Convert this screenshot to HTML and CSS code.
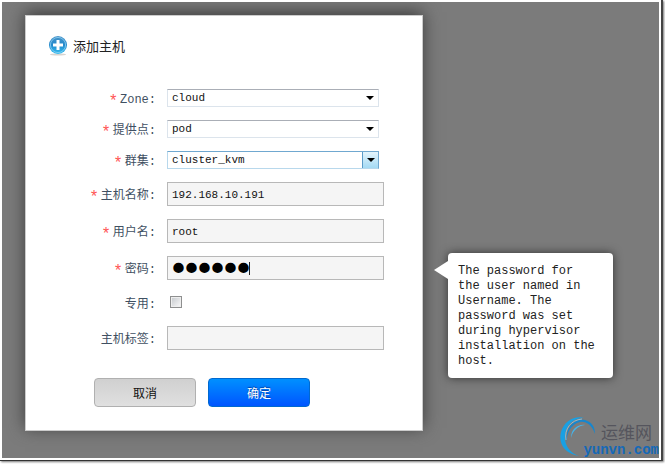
FILE: index.html
```html
<!DOCTYPE html>
<html lang="zh-CN">
<head>
<meta charset="utf-8">
<title>添加主机</title>
<link rel="stylesheet" href="styles.css">
</head>
<body>
<div class="frame">
<main class="stage">
  <section class="dialog" aria-labelledby="dialog-title">
    <header class="dialog-head">
      <svg class="add-icon" viewBox="0 0 20 22" aria-hidden="true">
        <defs>
          <linearGradient id="ball" x1="0" y1="0" x2="0" y2="1">
            <stop offset="0" stop-color="#4a94c8"/><stop offset=".5" stop-color="#2389cc"/><stop offset="1" stop-color="#35c0f2"/>
          </linearGradient>
        </defs>
        <ellipse cx="10" cy="19.5" rx="8" ry="1" fill="#d8d4d0"/>
        <circle cx="10" cy="10" r="9" fill="url(#ball)"/>
        <circle cx="10" cy="10" r="7.6" fill="none" stroke="#8fd0f2" stroke-width=".8"/>
        <path d="M8.500 5h3v3.500h3.500v3h-3.500v3.500h-3v-3.500h-3.500v-3h3.500z" fill="#fff"/>
      </svg>
      <h1 id="dialog-title">添加主机</h1>
    </header>
    <form class="form">
      <div class="row">
        <label for="zone"><span class="req">*</span>Zone:</label>
        <span class="picker"><select id="zone"><option>cloud</option></select><span class="arrow"></span></span>
      </div>
      <div class="row">
        <label for="pod"><span class="req">*</span>提供点:</label>
        <span class="picker"><select id="pod"><option>pod</option></select><span class="arrow"></span></span>
      </div>
      <div class="row">
        <label for="cluster"><span class="req">*</span>群集:</label>
        <span class="picker active"><select id="cluster"><option>cluster_kvm</option></select><span class="arrow"></span></span>
      </div>
      <div class="row">
        <label for="host"><span class="req">*</span>主机名称:</label>
        <input class="field" id="host" type="text" value="192.168.10.191">
      </div>
      <div class="row">
        <label for="user"><span class="req">*</span>用户名:</label>
        <input class="field" id="user" type="text" value="root">
      </div>
      <div class="row">
        <label for="password"><span class="req">*</span>密码:</label>
        <span class="secret">
          <input class="field" id="password" type="password" value="secret" aria-describedby="password-tip">
          <span class="caret"></span>
        </span>
      </div>
      <div class="row check-row">
        <label for="dedicated">专用:</label>
        <input class="check" id="dedicated" type="checkbox">
      </div>
      <div class="row">
        <label for="tags">主机标签:</label>
        <input class="field" id="tags" type="text">
      </div>
      <div class="actions">
        <button class="btn" type="button">取消</button>
        <button class="btn primary" type="button">确定</button>
      </div>
    </form>
  </section>
  <aside class="tip" id="password-tip" role="tooltip">The password for the user named in Username. The password was set during hypervisor installation on the host.</aside>
  <div class="brand">
    <svg class="swirl" viewBox="0 0 38 42" aria-hidden="true">
      <path d="M20 40C6 38-1 28 2 16C5 5 16-1 25 2C14 2 7 9 6 19C5 29 11 37 20 40Z" fill="#18a0e4"/>
      <path d="M8 27C5 13 15 2 26 4C33 6 36 11 36 18C33 9 27 5 21 6C12 8 7 17 8 27Z" fill="#1687cf"/>
      <path d="M12 22C12 13 19 8 26 9C19 10 14 14 12 22Z" fill="#45b4ea"/>
      <path d="M7 24C5 13 12 4 23 3" fill="none" stroke="#a4d6ee" stroke-width=".7"/>
    </svg>
    <div class="brand-text"><span class="brand-name">运维网</span><span class="brand-url">yunvn.com</span></div>
  </div>
</main>
</div>
</body>
</html>
```
FILE: styles.css
```css
* { box-sizing: border-box; }

body {
  margin: 0;
  height: 100vh;
  padding: 0 2px 3px 0;
  background: #fff;
  color: #111;
  font: 11px/16px "Liberation Mono", "Noto Sans CJK SC", monospace;
}

.frame {
  height: 100%;
  padding: 2px;
  border-right: 2px solid #444;
  border-bottom: 1px solid #333;
  box-shadow: 1px 1px 2px #777;
}

.stage {
  position: relative;
  height: 100%;
  padding: 13px 23px;
  background: #7b7b7b;
  overflow: hidden;
}

.dialog {
  width: 65%;
  min-width: 398px;
  padding: 19px 24px 23px;
  background: #fff;
  border: 1px solid #ccc;
  box-shadow: 0 -3px 16px #3c3c3c;
}

.dialog-head {
  display: flex;
  align-items: center;
  gap: 5px;
  height: 22px;
}

.add-icon { width: 20px; height: 22px; margin-left: -2px; }

h1 {
  margin: 0;
  color: #222;
  font: 13px/20px "Noto Sans CJK SC", sans-serif;
}

.form {
  display: flex;
  flex-direction: column;
  gap: 13px;
  padding-top: 32px;
}

.row {
  display: grid;
  grid-template-columns: 106px 217px;
  column-gap: 11px;
  align-items: center;
}

label {
  height: 18px;
  padding-top: 2px;
  color: #3f5062;
  font-size: 12px;
  line-height: 18px;
  text-align: right;
  white-space: nowrap;
}

.req {
  margin-right: 2px;
  color: #f55;
  font-size: 16px;
  line-height: 12px;
  vertical-align: -3px;
}

.picker {
  position: relative;
  display: flex;
  width: 212px;
  height: 18px;
  border: 1px solid #dce4ec;
  border-top-color: #aaaeb6;
}

select {
  appearance: none;
  width: 100%;
  padding: 0 20px 0 4px;
  border: 0;
  outline: 0;
  background: none;
  color: #111;
  font: inherit;
}

.arrow {
  position: absolute;
  inset: 0 0 0 auto;
  display: grid;
  place-items: center;
  width: 16px;
  pointer-events: none;
}

.arrow::before {
  content: "";
  border: 4px solid transparent;
  border-top-color: #000;
  border-bottom: 0;
}

.active { border-color: #70a8d0 #70a8d0 #b8d8ec #b8d8ec; }

.active .arrow {
  border: 1px solid #5b9bc8;
  border-width: 0 0 0 1px;
  background: linear-gradient(#e4f4fc, #a4daf4);
}

.field {
  width: 100%;
  height: 24px;
  padding: 2px 4px 0;
  border: 1px solid #b8b8b8;
  border-radius: 0;
  outline: 0;
  background: #f5f5f5;
  color: #111;
  font: inherit;
}

.secret { position: relative; display: flex; }

.secret .field {
  padding-top: 0;
  color: #000;
  font: 22px/22px "DejaVu Sans", sans-serif;
  -webkit-text-stroke: 4px #000;
}

.caret {
  position: absolute;
  top: 6px;
  left: 82px;
  width: 1px;
  height: 13px;
  background: #222;
}

.check-row { height: 20px; }

.check {
  appearance: none;
  width: 12px;
  height: 12px;
  margin: 0 3px 2px;
  border: 1px solid #8e8f8f;
  background: linear-gradient(135deg, #c4c8cc, #fafafa);
  box-shadow: inset 0 0 0 1px #eee;
}

.actions {
  display: flex;
  gap: 12px;
  margin: 15px 0 0 44px;
}

.btn {
  width: 102px;
  height: 29px;
  padding: 0;
  border: 1px solid #b0b0b0;
  border-radius: 4px;
  background: linear-gradient(#d0d0d0, #e0e0e0);
  color: #111;
  font: 12px/20px "Noto Sans CJK SC", sans-serif;
}

.primary {
  border-color: #0069cf;
  background: linear-gradient(#0090ff, #0055ff);
  color: #fff;
  text-shadow: 0 -1px 1px #0040a0;
}

.tip {
  position: absolute;
  top: 251px;
  left: 446px;
  width: 165px;
  padding: 11px 14px 9px 10px;
  border-radius: 4px;
  background: #fff;
  box-shadow: 0 0 10px #333;
  color: #222;
  font-size: 12px;
  line-height: 15px;
}

.tip::before {
  content: "";
  position: absolute;
  top: 8px;
  left: -14px;
  border: 9px solid transparent;
  border-right: 14px solid #fff;
  border-left: 0;
}

.brand {
  position: absolute;
  right: 0;
  bottom: 0;
  display: flex;
  align-items: flex-end;
}

.swirl { width: 38px; height: 42px; margin-right: -14px; }

.brand-text {
  display: flex;
  flex-direction: column;
  align-items: flex-end;
}

.brand-name {
  padding-right: 7px;
  color: #55555d;
  font: 17px/20px "Noto Sans CJK SC", sans-serif;
}

.brand-url {
  color: #1569b8;
  font-size: 14px;
  font-weight: bold;
  line-height: 16px;
}
```
